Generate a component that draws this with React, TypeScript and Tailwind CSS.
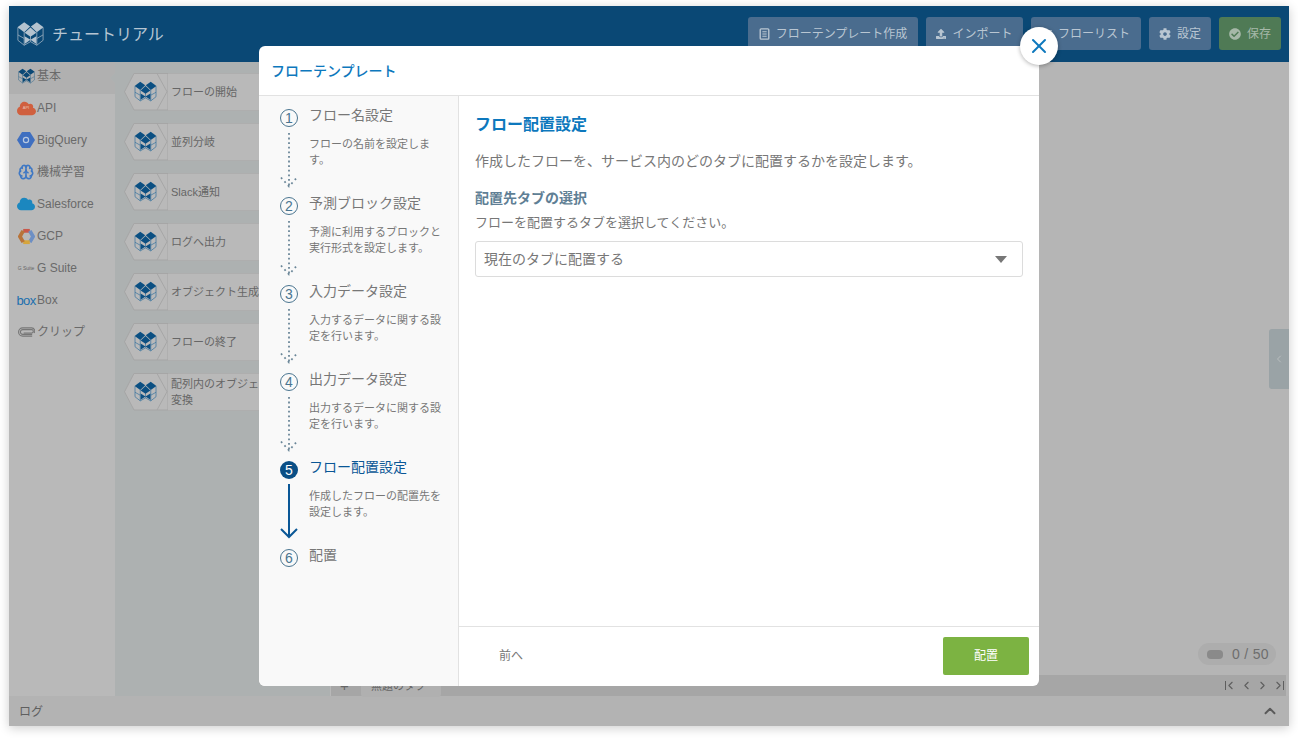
import React from 'react';
import { FaCog, FaCheckCircle, FaList, FaCloud, FaUpload } from 'react-icons/fa';
import { Brain, ChevronUp, ChevronLeft, ChevronRight, X } from 'lucide-react';

const Logo: React.FC<{ top: string; line: string; className?: string }> = ({ top, line, className }) => (
  <svg viewBox="0 0 30 28" className={className} fill="none" stroke={line} strokeWidth="1">
    <path d="M1 7V21L8 26.5L15 22.5L22 26.5L29 21V7" />
    <path d="M8 12V26.5M22 12V26.5M1 15L8 19M29 15L22 19" />
    <path d="M15 16V22.5" />
    <path d="M0.5 6.5L8 1L14.6 5.6L8 12Z" fill={top} stroke="none" />
    <path d="M15.4 5.6L22 1L29.5 6.5L22 12Z" fill={top} stroke="none" />
    <path d="M8.5 12.5L15 6.8L21.5 12.5L15 17Z" fill={top} stroke="none" />
    <path d="M8.5 16.5L15 20.5L8.5 25Z M21.5 16.5L15 20.5L21.5 25Z" fill={top} stroke="none" />
  </svg>
);

const HexIcon: React.FC<{ fill: string }> = ({ fill }) => (
  <svg viewBox="0 0 18 18" className="w-[18px] h-[18px]">
    <path d="M5 1H13L18 9L13 17H5L0 9Z" fill={fill} />
    <circle cx="9" cy="9" r="2.6" fill="none" stroke="#b8c8e0" strokeWidth="1.2" />
  </svg>
);

const GcpIcon = () => (
  <svg viewBox="0 0 18 18" className="w-[17px] h-[17px]" fill="none" strokeWidth="4">
    <path d="M5.5 3H12.5" stroke="#c9584a" />
    <path d="M12.5 3L16 9L12.5 15" stroke="#6d8fc4" />
    <path d="M12.5 15H5.5" stroke="#d6a53c" />
    <path d="M5.5 15L2 9L5.5 3" stroke="#b8743a" />
  </svg>
);

const ClipIcon = () => (
  <svg viewBox="0 0 18 10" className="w-[17px] h-[10px]" fill="none" stroke="#777" strokeWidth="1.2">
    <path d="M15 7.5H5a2.5 2.5 0 0 1 0-5h9.5a1.5 1.5 0 0 1 0 3.5H6" />
    <path d="M15 9.4H5A4.4 4.4 0 0 1 5 .6h9.5a3.3 3.3 0 0 1 2.5 5.4" />
  </svg>
);

const ApiIcon = () => (
  <span className="relative flex items-center justify-center">
    <FaCloud className="text-[#d0603f] text-[19px]" />
    <span className="absolute top-[7px] text-[4px] leading-none text-[#e8c4b8]">API</span>
  </span>
);

const sideItems: { label: string; icon: React.ReactNode; active?: boolean }[] = [
  { label: '基本', icon: <Logo top="#0a4875" line="#3f6f92" className="w-[17px] h-[16px]" />, active: true },
  { label: 'API', icon: <ApiIcon /> },
  { label: 'BigQuery', icon: <HexIcon fill="#3f6fc0" /> },
  { label: '機械学習', icon: <Brain size={16} strokeWidth={2.4} className="text-[#3f78c4]" /> },
  { label: 'Salesforce', icon: <FaCloud className="text-[#1b87bf] text-[18px]" /> },
  { label: 'GCP', icon: <GcpIcon /> },
  { label: 'G Suite', icon: <span className="text-[5px] text-[#666] leading-none whitespace-nowrap">G Suite</span> },
  { label: 'Box', icon: <span className="text-[13px] text-[#1b6fae] leading-none tracking-tighter">box</span> },
  { label: 'クリップ', icon: <ClipIcon /> },
];

const blocks = ['フローの開始', '並列分岐', 'Slack通知', 'ログへ出力', 'オブジェクト生成', 'フローの終了', '配列内のオブジェクト変換'];

const steps = [
  { title: 'フロー名設定', desc: 'フローの名前を設定します。', n: 1 },
  { title: '予測ブロック設定', desc: '予測に利用するブロックと実行形式を設定します。', n: 2 },
  { title: '入力データ設定', desc: '入力するデータに関する設定を行います。', n: 3 },
  { title: '出力データ設定', desc: '出力するデータに関する設定を行います。', n: 4 },
  { title: 'フロー配置設定', desc: '作成したフローの配置先を設定します。', n: 5, active: true },
  { title: '配置', desc: '', n: 6 },
];

const DottedArrow = () => (
  <svg viewBox="0 0 18 56" className="w-[18px] h-[56px] mt-[5px]" fill="none" stroke="#6a8698" strokeWidth="1.8">
    <path d="M9 1V55" strokeDasharray="1.8 2.8" />
    <path d="M1 45.5L9 54.5L17 45.5" strokeDasharray="1.8 3.4" />
  </svg>
);

const SolidArrow = () => (
  <svg viewBox="0 0 18 56" className="w-[18px] h-[56px] mt-[5px]" fill="none" stroke="#0a5796" strokeWidth="2">
    <path d="M9 0V53" />
    <path d="M1 45L9 53L17 45" />
  </svg>
);

const BookIcon = () => (
  <svg viewBox="0 0 12 14" className="w-[11px] h-[12px]" fill="none" stroke="#b9c6d2" strokeWidth="1.6">
    <rect x="1" y="1" width="10" height="12" rx="1" />
    <path d="M3.5 4.5H8.5M3.5 7H8.5M3.5 9.5H8.5" strokeWidth="1.2" />
  </svg>
);

const HeaderButton: React.FC<{ icon: React.ReactNode; label: string; className: string }> = ({ icon, label, className }) => (
  <button className={`h-[33px] flex items-center justify-center gap-[6px] rounded-[3px] text-xs ${className}`}>
    {icon}
    {label}
  </button>
);

export default function App() {
  return (
    <div className="h-[738px] w-full bg-white pt-[6px] px-[9px] font-['Liberation_Sans','Noto_Sans_CJK_JP',sans-serif] overflow-hidden">
      <div className="relative h-[720px] flex flex-col shadow-[0_2px_10px_rgba(0,0,0,0.2)] bg-[#b5b5b5]">
        <header className="h-[56px] shrink-0 bg-[#0a4875] flex items-center pl-[8px] pr-[8px]">
          <Logo top="#b4c3cf" line="#8fa7ba" className="w-[27px] h-[26px]" />
          <span className="ml-[8px] pt-[2px] text-base text-[#b6c5d2]">チュートリアル</span>
          <div className="ml-auto flex gap-2 -mt-[1px]">
            <HeaderButton icon={<BookIcon />} label="フローテンプレート作成" className="w-[170px] bg-[#4a6c8e] text-[#b9c6d2]" />
            <HeaderButton icon={<FaUpload className="text-[10px]" />} label="インポート" className="w-[97px] bg-[#4a6c8e] text-[#b9c6d2]" />
            <HeaderButton icon={<FaList className="text-[10px]" />} label="フローリスト" className="w-[110px] bg-[#4a6c8e] text-[#b9c6d2]" />
            <HeaderButton icon={<FaCog className="text-[12px]" />} label="設定" className="w-[62px] bg-[#4a6c8e] text-[#b9c6d2]" />
            <HeaderButton icon={<FaCheckCircle className="text-[12px]" />} label="保存" className="w-[62px] bg-[#4f7a55] text-[#a6b8a8]" />
          </div>
        </header>

        <div className="flex-1 flex min-h-0">
          <nav className="w-[106px] shrink-0 bg-[#b9b9b9]">
            {sideItems.map((item) => (
              <div key={item.label} className={`relative h-[32px] flex items-center pl-[6px] pb-[4px] text-xs text-[#6a6a6a] ${item.active ? 'bg-[#b0b0b0]' : ''}`}>
                <span className="w-[22px] flex justify-center shrink-0">{item.icon}</span>
                <span>{item.label}</span>
                {item.active && <span className="absolute right-0 top-[11px] border-y-[5px] border-y-transparent border-r-[5px] border-r-[#adb1b1]" />}
              </div>
            ))}
          </nav>

          <div className="w-[215px] shrink-0 bg-[#adb1b1] pt-[11px] pl-[9px] flex flex-col gap-[12.5px] overflow-hidden">
            {blocks.map((label) => (
              <div key={label} className="flex h-[37.5px] w-[215px] shrink-0">
                <svg viewBox="0 0 44 38" preserveAspectRatio="none" className="w-[44px] h-full shrink-0">
                  <path d="M0.5 19L10 0.5H44V37.5H10Z" fill="#b9b9b9" stroke="#a5a5a5" />
                  <path d="M33 0.5L43 19L33 37.5" fill="none" stroke="#a5a5a5" />
                </svg>
                <div className="relative -ml-[44px] w-[44px] shrink-0 h-full flex items-center justify-center pr-[1px]">
                  <Logo top="#0a4f82" line="#3f77a0" className="w-[23px] h-[21px]" />
                </div>
                <div className="flex-1 bg-[#b9b9b9] border-y border-[#aeaeae] pl-[3px] flex items-center text-[11px] leading-[16px] text-[#666] w-[90px]">
                  {label === '配列内のオブジェクト変換' ? (
                    <span>配列内のオブジェクト<br />変換</span>
                  ) : (
                    label
                  )}
                </div>
              </div>
            ))}
          </div>

          <div className="relative flex-1 flex flex-col justify-end">
            <div className="absolute right-[13px] bottom-[31px] h-[22px] w-[78px] rounded-full bg-[#adadad] flex items-center pl-[9px] gap-[9px] text-sm tracking-[0.3px] text-[#6e6e6e]">
              <span className="w-[16px] h-[9px] rounded-[4px] bg-[#8a8a8a]" />
              0 / 50
            </div>
            <div className="absolute right-0 top-[267px] w-[20px] h-[60px] rounded-l-[3px] bg-[#9aa3a6] flex items-center justify-center">
              <ChevronLeft size={12} className="text-[#b9bebf]" />
            </div>
            <div className="h-[21px] mr-[3px] bg-[#a6a6a6] border-l border-[#b8b8b8] flex items-end pl-[9px] text-[#666]">
              <span className="text-[15px] leading-[20px] w-[20px]">+</span>
              <span className="ml-[1px] w-[80px] h-[18px] bg-[#b0b0b0] rounded-b-[3px] text-[11px] leading-[14px] pl-[10px] mb-[-1px]">無題のタブ</span>
              <div className="ml-auto flex items-center pr-[2px] h-full text-[#5e5e5e]">
                <span className="w-[1px] h-[9px] bg-[#5e5e5e] ml-[1px] -mr-[2px]" />
                <ChevronLeft size={13} />
                <ChevronLeft size={13} className="ml-[3px]" />
                <ChevronRight size={13} className="ml-[3px]" />
                <ChevronRight size={13} className="ml-[3px] -mr-[2px]" />
                <span className="w-[1px] h-[9px] bg-[#5e5e5e]" />
              </div>
            </div>
          </div>
        </div>

        <footer className="h-[30px] shrink-0 bg-[#b3b3b3] flex items-center pl-[10px] pr-[10px] text-xs text-[#5f5f5f]">
          <span className="pt-[2px]">ログ</span>
          <ChevronUp size={18} className="ml-auto text-[#5a5a5a]" strokeWidth={2.5} />
        </footer>

        {/* modal */}
        <div className="absolute left-[250px] top-[40px] w-[780px] h-[640px] bg-white rounded-[6px] flex flex-col">
          <div className="h-[50px] shrink-0 border-b border-[#e2e2e2] flex items-center pl-[12px] text-sm font-medium text-[#0d78bd]">
            フローテンプレート
          </div>
          <div className="flex-1 flex min-h-0">
            <aside className="w-[200px] shrink-0 bg-[#f9f9f9] border-r border-[#e2e2e2] rounded-bl-[6px] pt-[8px]">
              {steps.map((s) => (
                <div key={s.n} className="h-[88px] flex">
                  <div className="w-[50px] shrink-0 pt-[5px] flex flex-col items-center pl-[10px]">
                    <span className={`w-[18px] h-[18px] shrink-0 rounded-full flex items-center justify-center text-sm font-light leading-none ${s.active ? 'bg-[#0a4f86] text-white font-bold' : 'border border-[#4a7590] text-[#4a7590]'}`}>
                      {s.n}
                    </span>
                    {s.n < 5 && <DottedArrow />}
                    {s.n === 5 && <SolidArrow />}
                  </div>
                  <div className="w-[135px]">
                    <div className={`text-sm leading-[24px] -mt-[1px] whitespace-nowrap ${s.active ? 'text-[#0a5796]' : 'text-[#777]'}`}>{s.title}</div>
                    {s.desc && <p className="mt-[9px] text-[11px] leading-[16px] text-[#777]">{s.desc}</p>}
                  </div>
                </div>
              ))}
            </aside>
            <section className="flex-1 flex flex-col min-w-0">
              <div className="flex-1 pl-[16px] pr-[16px] pt-[17px]">
                <h2 className="text-base font-bold leading-[24px] text-[#0d78bd]">フロー配置設定</h2>
                <p className="mt-[12px] text-sm leading-[24px] text-[#777]">作成したフローを、サービス内のどのタブに配置するかを設定します。</p>
                <h3 className="mt-[13px] text-sm font-bold leading-[24px] text-[#5f7f95]">配置先タブの選択</h3>
                <p className="text-[13px] leading-[24px] text-[#777] mt-[1px]">フローを配置するタブを選択してください。</p>
                <div className="mt-[6px] h-[36px] border border-[#dcdcdc] rounded-[3px] flex items-center pl-[8px] pr-[15px] text-sm text-[#777]">
                  現在のタブに配置する
                  <span className="ml-auto border-x-[6px] border-x-transparent border-t-[7px] border-t-[#777]" />
                </div>
              </div>
              <div className="h-[60px] shrink-0 border-t border-[#e2e2e2] flex items-center pl-[40px] pr-[10px] pb-[2px] text-xs text-[#777]">
                前へ
                <button className="ml-auto w-[86px] h-[38px] bg-[#7cb342] rounded-[2px] text-white text-xs">配置</button>
              </div>
            </section>
          </div>
          <button className="absolute -right-[19px] -top-[19px] w-[38px] h-[38px] rounded-full bg-white shadow-[0_1px_4px_rgba(0,0,0,0.3)] flex items-center justify-center text-[#0d78bd]">
            <X size={24} strokeWidth={2} />
          </button>
        </div>
      </div>
    </div>
  );
}
